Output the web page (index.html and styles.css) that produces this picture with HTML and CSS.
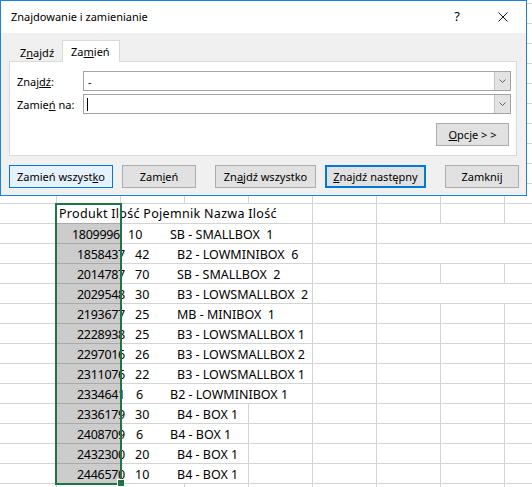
FILE: index.html
```html
<!DOCTYPE html>
<html lang="pl">
<head>
    <meta charset="UTF-8">
    <title>Znajdowanie i zamienianie</title>
    <link rel="stylesheet" href="styles.css">
</head>
<body>
    <!-- okno dialogowe -->
    <div class="dialog">
        <div class="titlebar">
            <span class="title">Znajdowanie i zamienianie</span>
            <span class="tb-btn help">?</span>
            <span class="tb-btn">
                <svg width="10" height="10" viewBox="0 0 10 10"><path d="M0.5 0.5L9.5 9.5M9.5 0.5L0.5 9.5" stroke="#111" stroke-width="1" fill="none"/></svg>
            </span>
        </div>
        <div class="dlg-body">
            <div class="tabs">
                <div class="tab">Z<u>n</u>ajdź</div>
                <div class="tab active">Za<u>m</u>ień</div>
            </div>
            <div class="panel">
                <div class="field">
                    <label>Znaj<u>dź</u>:</label>
                    <div class="combo">
                        <span class="value">-</span>
                        <span class="drop"><svg width="7" height="4" viewBox="0 0 7 4"><path d="M0.5 0.5L3.5 3.5L6.5 0.5" stroke="#606060" fill="none"/></svg></span>
                    </div>
                </div>
                <div class="field">
                    <label>Zamie<u>ń</u> na:</label>
                    <div class="combo">
                        <span class="caret"></span>
                        <span class="drop"><svg width="7" height="4" viewBox="0 0 7 4"><path d="M0.5 0.5L3.5 3.5L6.5 0.5" stroke="#606060" fill="none"/></svg></span>
                    </div>
                </div>
                <div class="options">
                    <button class="btn opt"><u>O</u>pcje &gt; &gt;</button>
                </div>
            </div>
            <div class="actions">
                <button class="btn default w-all">Zamień wszyst<u>k</u>o</button>
                <button class="btn w-one">Zam<u>i</u>eń</button>
                <button class="btn w-find far">Zn<u>a</u>jdź wszystko</button>
                <button class="btn w-find focus"><u>Z</u>najdź następny</button>
                <button class="btn w-one far">Zamknij</button>
            </div>
        </div>
    </div>

    <!-- arkusz -->
    <div class="sheet">
        <div class="row head"><span class="htext">Produkt Ilość Pojemnik Nazwa Ilość</span></div>
        <div class="row m312far"><span class="id first">1809996</span><span class="qty q1">10</span><span>SB - SMALLBOX  1</span></div>
        <div class="row m312far"><span class="id">1858437</span><span class="qty">42</span><span>B2 - LOWMINIBOX  6</span></div>
        <div class="row m312"><span class="id">2014787</span><span class="qty">70</span><span>SB - SMALLBOX  2</span></div>
        <div class="row m312far"><span class="id">2029548</span><span class="qty">30</span><span>B3 - LOWSMALLBOX  2</span></div>
        <div class="row m312"><span class="id">2193677</span><span class="qty">25</span><span>MB - MINIBOX  1</span></div>
        <div class="row m312"><span class="id">2228938</span><span class="qty">25</span><span>B3 - LOWSMALLBOX 1</span></div>
        <div class="row m312"><span class="id">2297016</span><span class="qty">26</span><span>B3 - LOWSMALLBOX 2</span></div>
        <div class="row m312"><span class="id">2311076</span><span class="qty">22</span><span>B3 - LOWSMALLBOX 1</span></div>
        <div class="row m312"><span class="id">2334641</span><span class="qty q6">6</span><span>B2 - LOWMINIBOX 1</span></div>
        <div class="row m248"><span class="id">2336179</span><span class="qty">30</span><span>B4 - BOX 1</span></div>
        <div class="row m248"><span class="id">2408709</span><span class="qty q6">6</span><span>B4 - BOX 1</span></div>
        <div class="row m248"><span class="id">2432300</span><span class="qty">20</span><span>B4 - BOX 1</span></div>
        <div class="row m248"><span class="id">2446570</span><span class="qty">10</span><span>B4 - BOX 1</span></div>

        <!-- zaznaczenie kolumny -->
        <div class="shade"></div>
        <div class="sel"></div>
        <div class="handle"></div>
    </div>
</body>
</html>
```

FILE: styles.css
```css
/* arkusz w tle */
:root {
    --grid: #d4d4d4;
    --accent: #0078d7;
    --excel: #217346;
}

body {
    margin: 0;
    width: 532px;
    height: 487px;
    overflow: hidden;
    font-family: "Noto Sans", "Open Sans", sans-serif;
    color: #000;
    background-color: #fff;
    background-image:
        linear-gradient(to right, transparent 63px, var(--grid) 63px),
        linear-gradient(to bottom, transparent 19px, var(--grid) 19px);
    background-size: 64px 100%, 100% 20px;
    background-position: 57px 0, 0 4px;
}

/* okno dialogowe */
.dialog {
    width: 525px;
    border: 1px solid #1883d7;
    background: #f0f0f0;
    font-size: 11px;
}

.titlebar {
    height: 32px;
    background: #fff;
    display: flex;
    align-items: center;
}

.title {
    flex: 1;
    padding-left: 10px;
    padding-bottom: 1px;
}

.tb-btn {
    width: 46px;
    height: 32px;
    display: flex;
    align-items: center;
    justify-content: center;
}

.help {
    font-size: 13px;
    padding-bottom: 2px;
    box-sizing: border-box;
}

.dlg-body {
    padding: 7px 0 7px 8px;
}

.tabs {
    display: flex;
    align-items: flex-end;
    height: 21px;
}

.tab {
    height: 17px;
    line-height: 17px;
    padding: 0 8px 0 11px;
}

.tab.active {
    position: relative;
    z-index: 1;
    box-sizing: border-box;
    width: 58px;
    height: 22px;
    line-height: 21px;
    margin-bottom: -1px;
    padding-left: 8px;
    background: #fff;
    border: 1px solid #d9d9d9;
    border-bottom: 0;
}

.panel {
    box-sizing: border-box;
    width: 508px;
    padding: 9px 5px 9px 7px;
    background: #fff;
    border: 1px solid #d9d9d9;
}

.field {
    display: flex;
    align-items: center;
    height: 20px;
}

.field + .field {
    margin-top: 3px;
}

.field label {
    width: 66px;
}

.combo {
    flex: 1;
    height: 20px;
    box-sizing: border-box;
    border: 1px solid #a3a3a3;
    display: flex;
    align-items: center;
}

.value {
    padding-left: 4px;
}

.caret {
    width: 1px;
    height: 13px;
    margin-left: 3px;
    background: #000;
}

.drop {
    margin-left: auto;
    width: 15px;
    height: 18px;
    border-left: 1px solid #c4c4c4;
    background: #e3e3e3;
    display: flex;
    align-items: center;
    justify-content: center;
}

.options {
    display: flex;
    justify-content: flex-end;
    margin-top: 9px;
    padding-right: 2px;
}

.btn {
    height: 23px;
    box-sizing: border-box;
    padding: 0;
    border: 1px solid #adadad;
    background: #e1e1e1;
    font-family: inherit;
    font-size: 11px;
    color: #000;
}

.opt {
    width: 73px;
}

.actions {
    display: flex;
    gap: 9px;
    margin-top: 9px;
}

.w-all { width: 104px; }
.w-one { width: 74px; }
.w-find { width: 101px; }
.far { margin-left: 10px; }

.btn.default {
    border-color: var(--accent);
    background: #e5f1fb;
}

.btn.focus {
    border: 2px solid var(--accent);
}

/* wiersze arkusza */
.sheet {
    position: relative;
    margin-top: 8px;
    padding-left: 57px;
}

.row {
    display: flex;
    height: 20px;
    box-sizing: border-box;
    padding-top: 2px;
    line-height: 18px;
    font-size: 12.5px;
    white-space: pre;
    background-repeat: no-repeat;
    background-size: 100% 19px;
}

.row.head {
    padding-top: 1px;
    background-image: linear-gradient(to right, #fff 255px, transparent 255px);
}

.htext {
    padding-left: 2px;
    letter-spacing: 0.3px;
}

.row.m312 {
    background-image: linear-gradient(to right, transparent 64px, #fff 64px, #fff 255px, transparent 255px);
}

.row.m312far {
    background-image: linear-gradient(to right, transparent 64px, #fff 64px, #fff 255px, transparent 255px, transparent 320px, #fff 320px);
}

.row.m248 {
    background-image: linear-gradient(to right, transparent 64px, #fff 64px, #fff 191px, transparent 191px);
}

.id {
    width: 64px;
    flex: none;
    box-sizing: border-box;
    padding-left: 20px;
    letter-spacing: -0.3px;
}

.id.first {
    padding-left: 15px;
}

.qty {
    width: 56px;
    flex: none;
    box-sizing: border-box;
    padding-left: 14px;
}

.qty.q1 {
    width: 49px;
    padding-left: 7px;
}

.qty.q6 {
    width: 49px;
    padding-left: 15px;
}

/* zaznaczenie */
.shade {
    position: absolute;
    left: 57px;
    top: 19px;
    width: 63px;
    height: 260px;
    background: rgba(0, 0, 0, 0.2);
}

.sel {
    position: absolute;
    left: 55px;
    top: -1px;
    width: 67px;
    height: 282px;
    box-sizing: border-box;
    border: 2px solid var(--excel);
}

.handle {
    position: absolute;
    left: 117px;
    top: 275px;
    width: 8px;
    height: 8px;
    box-sizing: border-box;
    border: 1px solid #fff;
    background: var(--excel);
}
```
